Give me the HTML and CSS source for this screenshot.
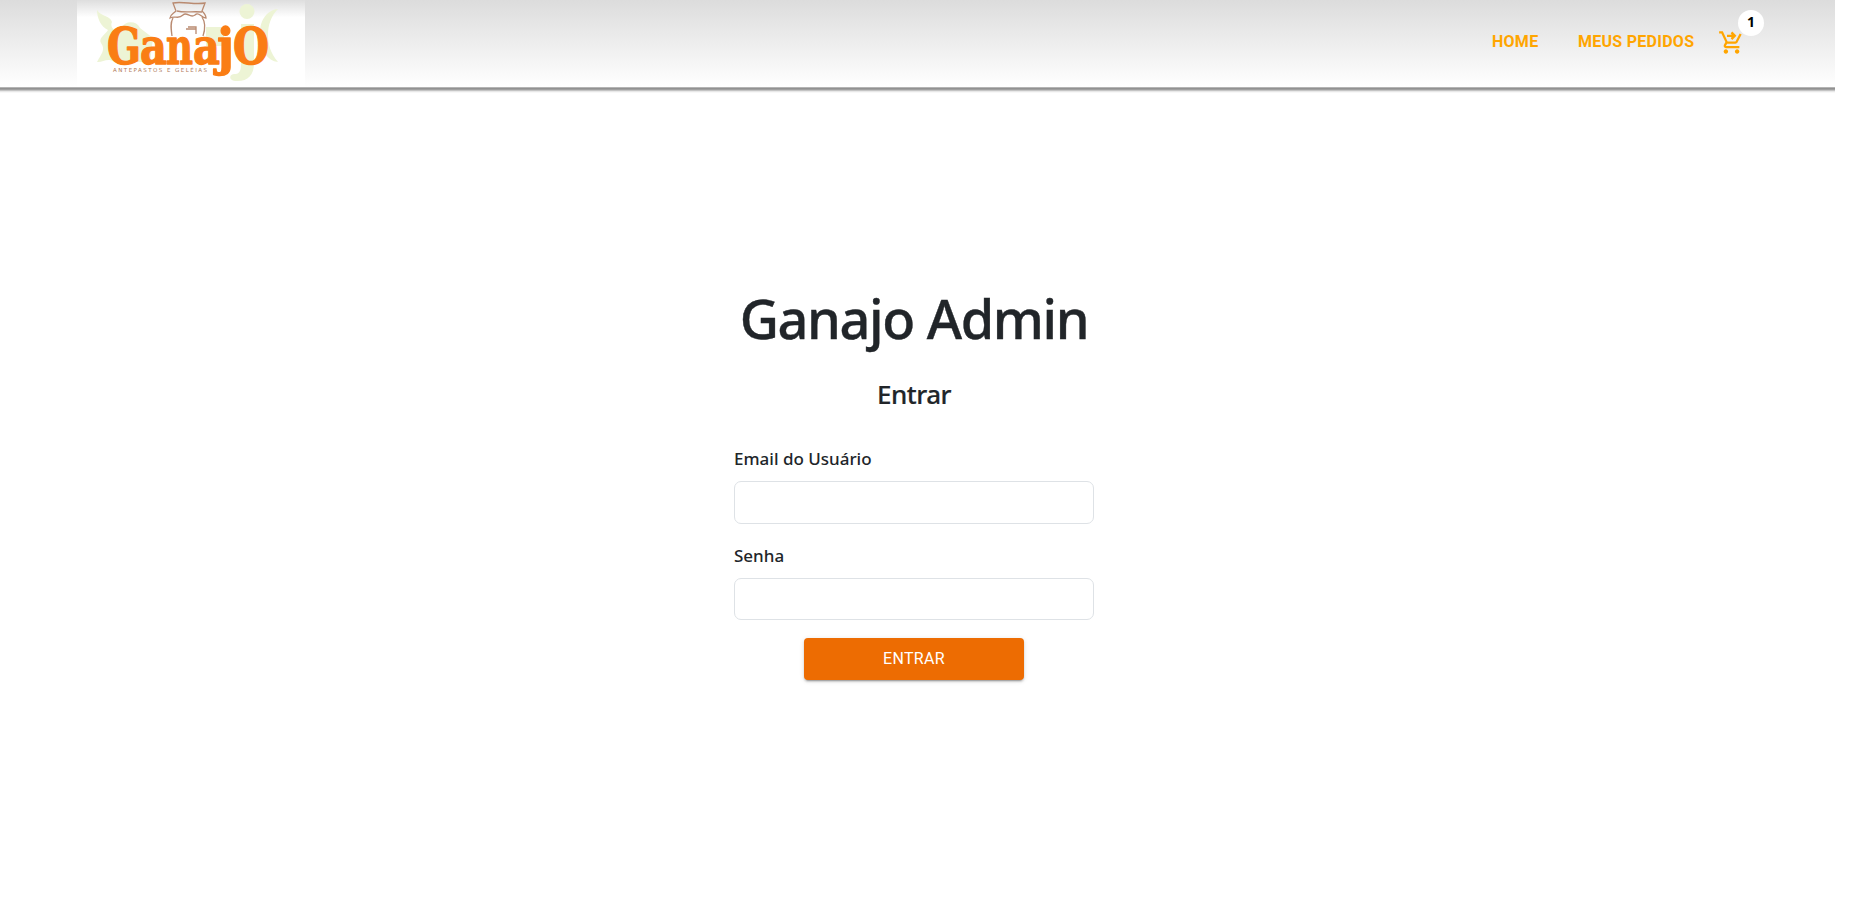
FILE: index.html
```html
<!DOCTYPE html>
<html lang="pt-BR">
<head>
<meta charset="utf-8">
<title>Ganajo Admin</title>
<link rel="stylesheet" href="styles.css">
</head>
<body>
<header class="topbar">
  <a class="brand">
    <svg class="logo" width="228" height="87" viewBox="77 0 228 87">
      <defs>
        <linearGradient id="shade" x1="0" y1="0" x2="0" y2="1">
          <stop offset="0" stop-color="#dedede"/><stop offset=".2" stop-color="#fff"/>
        </linearGradient>
      </defs>
      <rect x="77" width="228" height="87" fill="url(#shade)"/>
      <g class="logo-leaf">
        <path d="M97 10C101 17 110 15 112 22C109 28 117 34 121 28C125 21 136 20 140 28L153 38L150 62H114C108 57 102 63 97 62C101 54 106 50 101 43C98 38 106 34 108 30C101 27 97 18 97 10Z"/>
        <path d="M206 27H224V46H206Z"/>
        <circle cx="247" cy="11.500" r="7.500"/>
        <path d="M241 24H254V63C254 76 247 82 235 81C228 80 229 73 236 74C241 73 241 68 241 62Z"/>
        <path d="M278 9C266 10 259 22 260 36C261 50 267 61 278 62C270 53 268 43 268 35C268 25 271 16 278 9Z"/>
      </g>
      <g class="logo-jar">
        <path d="M173 3C182 1 195 5 205 3L202 11C204 13 206 15 206 18C201 18 199 11 195 15C190 19 187 11 183 15C178 20 175 15 170 18C170 15 173 14 176 11Z"/>
        <path d="M177 11C185 13 193 11 202 12M173 18C170 23 171 29 172 36M202 17C206 23 205 30 203 36M188 27H196V34M186 29L196 29"/>
      </g>
      <text class="logo-word" y="64"><tspan x="107" textLength="34" lengthAdjust="spacingAndGlyphs">G</tspan><tspan x="140" textLength="27" lengthAdjust="spacingAndGlyphs">a</tspan><tspan x="166" textLength="27" lengthAdjust="spacingAndGlyphs">n</tspan><tspan x="193" textLength="27" lengthAdjust="spacingAndGlyphs">a</tspan><tspan x="217" textLength="17" lengthAdjust="spacingAndGlyphs">j</tspan><tspan x="233" textLength="36" lengthAdjust="spacingAndGlyphs">O</tspan></text>
      <text class="logo-tag" x="113" y="72" textLength="94">ANTEPASTOS E GELÉIAS</text>
    </svg>
  </a>
  <nav class="menu">
    <a class="link home">HOME</a>
    <a class="link orders">MEUS PEDIDOS</a>
    <a class="cart">
      <svg width="27" height="27" viewBox="0 0 24 24" fill="#ffa500"><path d="M7 18c-1.100 0-1.990.9-1.990 2S5.900 22 7 22s2-.9 2-2-.9-2-2-2zm10 0c-1.100 0-1.990.9-1.990 2s.89 2 1.990 2 2-.9 2-2-.9-2-2-2zm-1.450-5c.75 0 1.410-.41 1.750-1.030L21 4.960 19.250 4l-3.700 7H8.530L4.270 2H1v2h2l3.600 7.590-1.350 2.440C4.520 15.370 5.480 17 7 17h12v-2H7l1.100-2h7.450zM11.290 3.710 12.700 2.300l3.700 3.700-3.710 3.700-1.410-1.410L12.170 7H8V5h4.170z"/></svg>
      <span class="badge">1</span>
    </a>
  </nav>
</header>
<main class="login">
  <h1 class="title">Ganajo Admin</h1>
  <h2 class="subtitle">Entrar</h2>
  <form class="form">
    <label class="label email" for="email">Email do Usuário</label>
    <input class="field" id="email" type="email">
    <label class="label senha" for="senha">Senha</label>
    <input class="field field-senha" id="senha" type="password">
    <button class="submit" type="button">ENTRAR</button>
  </form>
</main>
</body>
</html>
```
FILE: styles.css
```css
* { box-sizing: border-box; }
body {
  margin: 0;
  height: 918px;
  overflow: hidden;
  background: #fff;
  color: #212529;
  font-family: "Noto Sans", "Open Sans", sans-serif;
}
.topbar {
  width: 1835px;
  height: 87px;
  padding: 0 70px 0 77px;
  display: flex;
  justify-content: space-between;
  background: linear-gradient(#dcdcdc, #fff);
  box-shadow: 0 1px 0 #b4b4b4, 0 2px 0 #919191, 0 3px 0 #a0a0a0, 0 4px 0 #c4c4c4, 0 5px 0 #e8e8e8, 0 6px 0 #f8f8f8;
}
.brand, .logo { display: block; }
.logo-leaf { fill: #edf4d5; }
.logo-jar { fill: none; stroke: #b98a70; stroke-width: 1.3; }
.logo-word {
  font: bold 50px "DejaVu Serif", serif;
  fill: #fa7d14;
  stroke: #fa7d14;
  stroke-width: 1.3px;
  stroke-linejoin: round;
}
.logo-tag { font: 5.5px "DejaVu Sans", sans-serif; fill: #b07a5a; }
.menu { display: flex; align-items: flex-start; padding-top: 28px; }
.link {
  font: 700 16px/27px Roboto, sans-serif;
  letter-spacing: .27px;
  color: #ffa500;
  white-space: nowrap;
}
.home { width: 86px; }
.orders { width: 140px; }
.cart { position: relative; width: 47px; height: 28px; padding-top: 1px; }
.cart svg { display: block; }
.badge {
  position: absolute;
  left: 20px;
  top: -18px;
  width: 26px;
  height: 26px;
  border-radius: 50%;
  background: #fff;
  color: #000;
  font: 700 14px/24px "Open Sans", sans-serif;
  text-align: center;
}
.login {
  width: 360px;
  margin: 194px 0 0 734px;
  display: flex;
  flex-direction: column;
  align-items: center;
}
.title {
  margin: 0;
  font-size: 54px;
  font-weight: 500;
  line-height: 74px;
  letter-spacing: -1.35px;
  -webkit-text-stroke: .4px #212529;
  white-space: nowrap;
}
.subtitle {
  margin: 21px 0 0;
  font-size: 26px;
  font-weight: 500;
  line-height: 36px;
  letter-spacing: -.5px;
  -webkit-text-stroke: .2px #212529;
}
.form { width: 360px; margin-top: 33px; display: flex; flex-direction: column; }
.label {
  font-size: 17px;
  font-weight: 500;
  line-height: 28px;
  height: 36px;
}
.senha { margin-top: 18px; }
.field {
  width: 360px;
  height: 43px;
  padding: 6px 12px;
  border: 1px solid #dee2e6;
  border-radius: 7px;
  background: #fff;
}
.field-senha { height: 42px; }
.submit {
  align-self: center;
  width: 220px;
  height: 42px;
  margin-top: 18px;
  padding: 0;
  border: 0;
  border-radius: 4px;
  background: #ed6c02;
  color: #fff;
  font: 400 16px/40px Roboto, sans-serif;
  letter-spacing: .35px;
  box-shadow: 0 3px 1px -2px rgba(0,0,0,.2), 0 2px 2px rgba(0,0,0,.14), 0 1px 5px rgba(0,0,0,.12);
}
```
